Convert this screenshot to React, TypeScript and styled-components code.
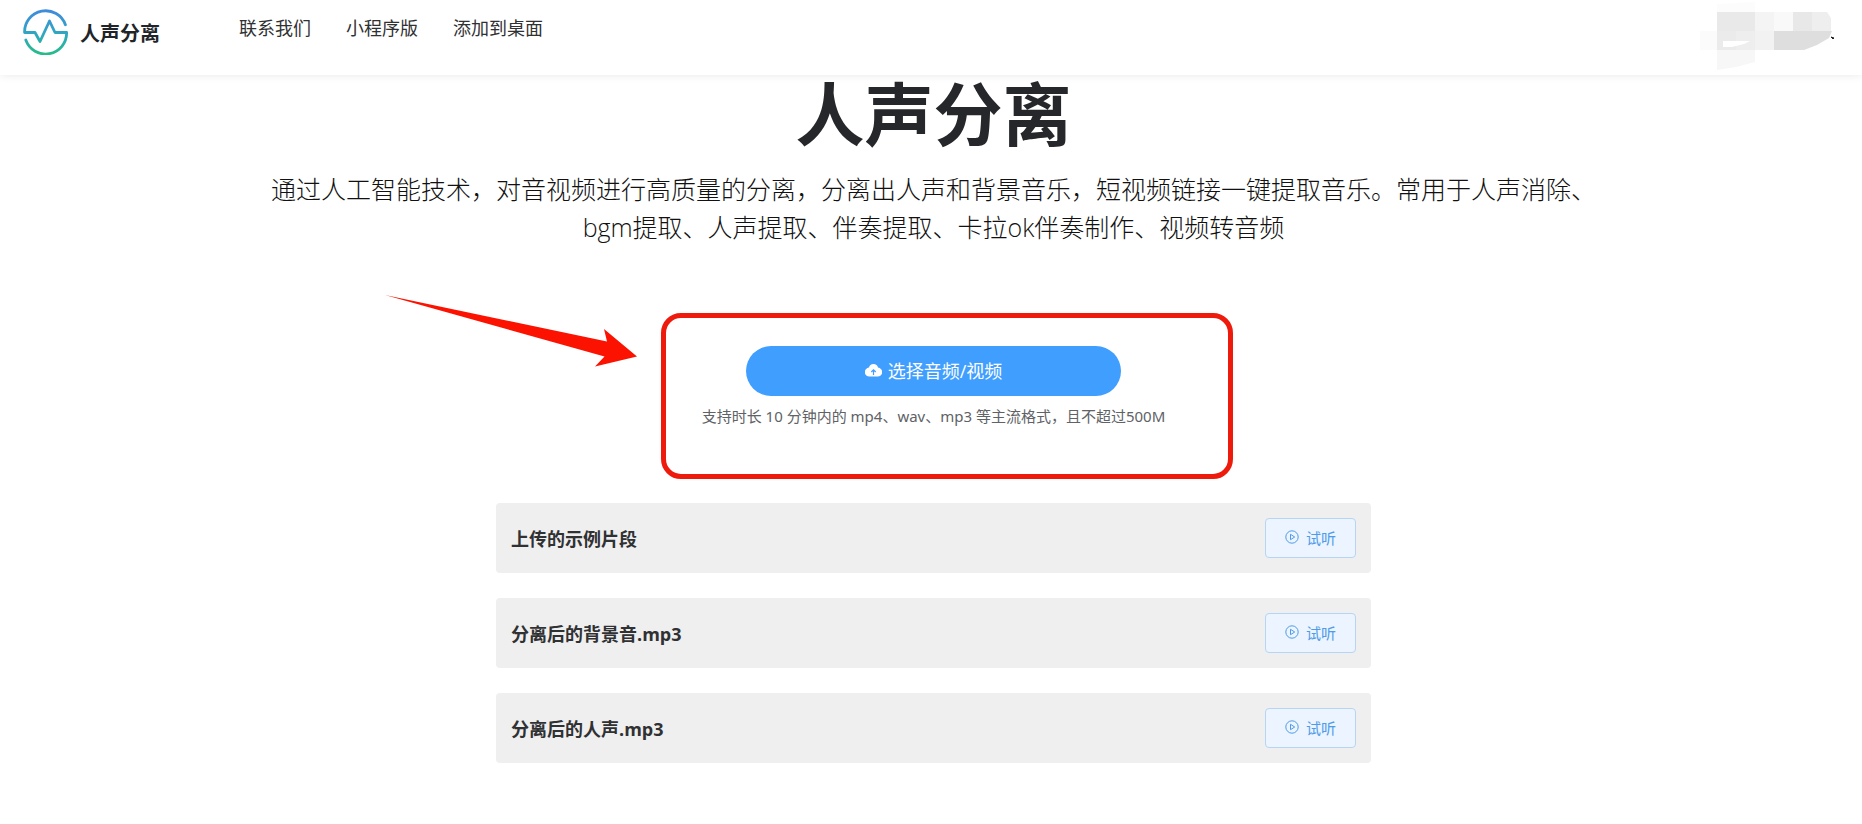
import React from "react";
import styled, { createGlobalStyle } from "styled-components";

const GlobalStyle = createGlobalStyle`
  * { box-sizing: border-box; }
  body {
    margin: 0;
    background: #fff;
    color: #212529;
    font-family: "Open Sans", "Noto Sans CJK SC", sans-serif;
  }
`;

const Header = styled.header`
  display: flex;
  align-items: flex-start;
  height: 75px;
  padding: 0 18px 0 23px;
  background: #fff;
  box-shadow: 0 1px 8px rgba(0, 0, 0, 0.08);
`;

const Brand = styled.a`
  display: flex;
  align-items: center;
  gap: 12px;
  height: 64px;
  color: #212529;
  font-size: 20px;
  font-weight: 700;
  text-decoration: none;
`;

const Nav = styled.nav`
  display: flex;
  gap: 35px;
  flex: 1;
  margin-left: 79px;
`;

const NavLink = styled.a`
  line-height: 56px;
  font-size: 18px;
  font-weight: 400;
  color: #303133;
  text-decoration: none;
`;

const Main = styled.main`
  display: flex;
  flex-direction: column;
  align-items: center;
  padding: 0 0 40px 5px;
`;

const Title = styled.h1`
  margin: 0;
  font-size: 69px;
  line-height: 78px;
  font-weight: 700;
  color: #26272a;
`;

const Lead = styled.p`
  width: 100%;
  max-width: 1340px;
  margin: 17px 0 0;
  font-size: 25px;
  line-height: 38px;
  font-weight: 300;
  color: #111;
  text-align: center;
`;

const Upload = styled.section`
  position: relative;
  display: flex;
  flex-direction: column;
  align-items: center;
  width: 100%;
  max-width: 548px;
  height: 167px;
  margin-top: 66px;
  padding-top: 34px;
`;

const Highlight = styled.div`
  position: absolute;
  top: 1px;
  left: 1px;
  width: 572px;
  height: 166px;
  border: 5px solid #ee1b0c;
  border-radius: 20px;
  pointer-events: none;
`;

const Arrow = styled.svg`
  position: absolute;
  top: -18px;
  left: -276px;
  pointer-events: none;
`;

const UploadButton = styled.button`
  display: flex;
  align-items: center;
  justify-content: center;
  gap: 6px;
  width: 375px;
  height: 50px;
  padding: 0 0 2px;
  border: 0;
  border-radius: 25px;
  background: #409eff;
  color: #fff;
  font-family: inherit;
  font-size: 18px;
`;

const Hint = styled.p`
  margin: 9px 0 0;
  font-family: "Noto Sans", "Noto Sans CJK SC", sans-serif;
  font-size: 15px;
  line-height: 22px;
  color: #606266;
  white-space: nowrap;
`;

const Samples = styled.ul`
  display: flex;
  flex-direction: column;
  gap: 25px;
  width: 100%;
  max-width: 875px;
  margin: 24px 0 0;
  padding: 0;
  list-style: none;
`;

const Sample = styled.li`
  display: flex;
  align-items: center;
  justify-content: space-between;
  height: 70px;
  padding: 0 15px;
  border-radius: 4px;
  background: #efefef;
  color: #303133;
  font-size: 18px;
  font-weight: 700;
`;

const PlayButton = styled.button`
  display: flex;
  align-items: center;
  justify-content: center;
  gap: 7px;
  width: 91px;
  height: 40px;
  padding: 0 0 2px;
  border: 1px solid #b6d5f5;
  border-radius: 4px;
  background: #ebf4ff;
  color: #4f9be8;
  font-family: inherit;
  font-size: 15px;
`;

const Logo = () => (
  <svg width="45" height="46" viewBox="0 0 45 46" fill="none" aria-hidden="true">
    <defs>
      <linearGradient id="wave" x1="0" y1="0" x2="0" y2="46" gradientUnits="userSpaceOnUse">
        <stop offset="0" stopColor="#4189dc" />
        <stop offset="0.5" stopColor="#31a5c4" />
        <stop offset="1" stopColor="#26bd88" />
      </linearGradient>
    </defs>
    <path
      d="M42.4 15.8A21 21 0 0 0 1.6 23.5H12L17 32.5L26.5 12L32 23.5H43.6A21 21 0 0 1 2.8 31"
      stroke="url(#wave)"
      strokeWidth="2.8"
      strokeLinejoin="round"
      strokeLinecap="round"
    />
  </svg>
);

const Account = () => (
  <svg width="146" height="74" viewBox="0 0 146 74" role="img" aria-label="account">
    <path d="M19 4L57 2V12H19Z" fill="#fcfcfc" />
    <rect x="2" y="31" width="18" height="19" fill="#fbfbfb" />
    <path d="M19 50H57V62L38 67L19 70Z" fill="#f7f7f7" />
    <rect x="19" y="12" width="38" height="19" fill="#e9e9e9" />
    <path d="M19 31H38V50H19Z" fill="#ebebeb" />
    <rect x="38" y="31" width="19" height="19" fill="#eeeeee" />
    <rect x="57" y="12" width="19" height="19" fill="#f4f4f4" />
    <rect x="57" y="31" width="19" height="19" fill="#f2f2f2" />
    <rect x="76" y="12" width="19" height="19" fill="#f9f9f9" />
    <rect x="95" y="12" width="19" height="19" fill="#e8e8e8" />
    <path d="M114 12H129L133 18V31H114Z" fill="#eeeeee" />
    <path d="M76 31H134L131 38L119 45L106 50H76Z" fill="#dedede" />
    <path d="M25 41H52L46 44L34 47H25Z" fill="#fff" />
    <path d="M133 37L136 38L135 39Z" stroke="#222" strokeWidth="1" />
  </svg>
);

const Cloud = () => (
  <svg width="17" height="14" viewBox="0 0 17 14" aria-hidden="true">
    <path d="M4 4.6A4.6 4.6 0 0 1 13 4.6A4.5 4.5 0 0 1 12.4 13.6H4.6A4.5 4.5 0 0 1 4 4.6Z" fill="#fff" />
    <path d="M8.5 12V7M6.3 9L8.5 6.8L10.7 9" stroke="#409eff" strokeWidth="1.2" fill="none" />
  </svg>
);

const PlayIcon = () => (
  <svg width="14" height="14" viewBox="0 0 14 14" fill="none" stroke="currentColor" aria-hidden="true">
    <circle cx="7" cy="7" r="6.2" />
    <path d="M5.5 4.3L9.7 7L5.5 9.7Z" strokeLinejoin="round" />
  </svg>
);

const samples = ["上传的示例片段", "分离后的背景音.mp3", "分离后的人声.mp3"];
const links = ["联系我们", "小程序版", "添加到桌面"];

export default function App() {
  return (
    <>
      <GlobalStyle />
      <Header>
        <Brand href="#">
          <Logo />
          人声分离
        </Brand>
        <Nav>
          {links.map((label) => (
            <NavLink key={label} href="#">{label}</NavLink>
          ))}
        </Nav>
        <Account />
      </Header>
      <Main>
        <Title>人声分离</Title>
        <Lead>
          通过人工智能技术，对音视频进行高质量的分离，分离出人声和背景音乐，短视频链接一键提取音乐。常用于人声消除、bgm提取、人声提取、伴奏提取、卡拉ok伴奏制作、视频转音频
        </Lead>
        <Upload>
          <UploadButton type="button">
            <Cloud />
            选择音频/视频
          </UploadButton>
          <Hint>支持时长 10 分钟内的 mp4、wav、mp3 等主流格式，且不超过500M</Hint>
          <Highlight />
          <Arrow width="254" height="74" viewBox="0 0 254 74" aria-hidden="true">
            <path d="M1 1L223 47.5L220 35L253 62.5L211 72.5L220.5 62.5Z" fill="#fc1200" />
          </Arrow>
        </Upload>
        <Samples>
          {samples.map((name) => (
            <Sample key={name}>
              {name}
              <PlayButton type="button">
                <PlayIcon />
                试听
              </PlayButton>
            </Sample>
          ))}
        </Samples>
      </Main>
    </>
  );
}
